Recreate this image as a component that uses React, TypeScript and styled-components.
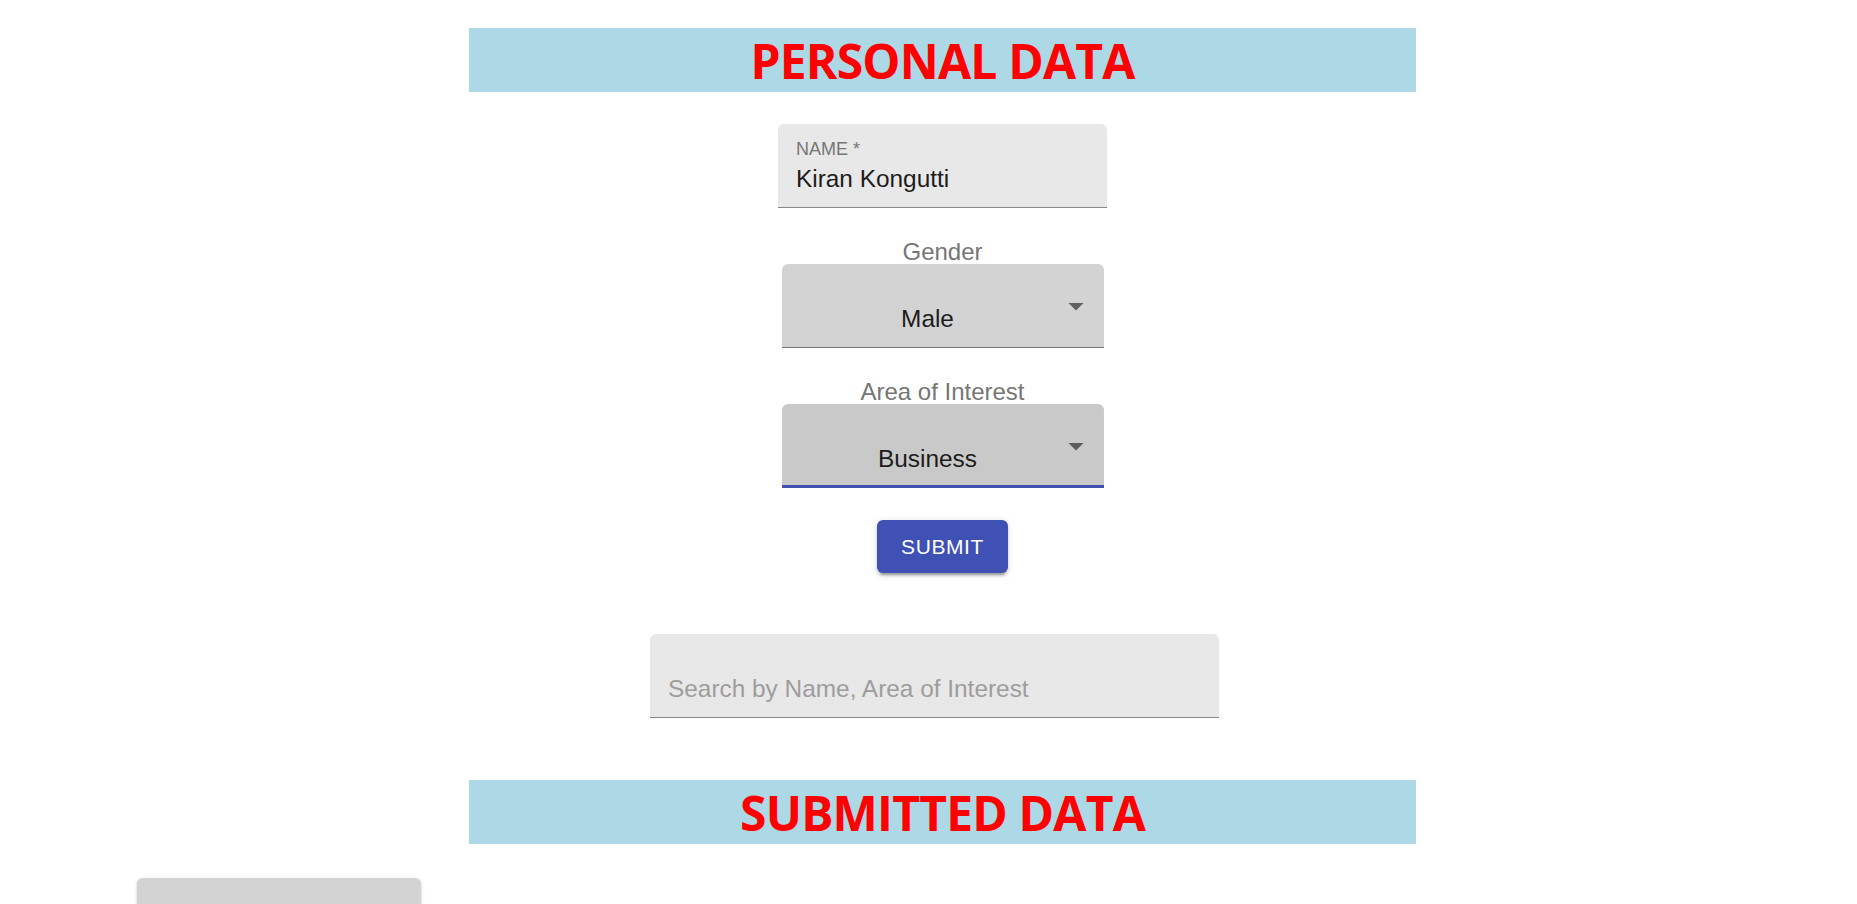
import React from "react";
import styled, { createGlobalStyle } from "styled-components";

const GlobalStyle = createGlobalStyle`
  html, body {
    margin: 0;
    padding: 0;
    overflow: hidden;
    background: #ffffff;
  }
  body {
    font-family: "Liberation Sans", Arial, sans-serif;
  }
`;

const Page = styled.div`
  width: 1857px;
  height: 904px;
  box-sizing: border-box;
  padding: 28px 0 0 28px;
  display: flex;
  flex-direction: column;
  overflow: hidden;
`;

const SectionHeader = styled.h1<{ $top?: number }>`
  align-self: center;
  width: 947px;
  height: 64px;
  margin: ${(p) => p.$top ?? 0}px 0 0 0;
  background: #add8e6;
  color: #ff0000;
  font-family: "Open Sans", "Noto Sans", sans-serif;
  font-weight: 700;
  font-size: 48px;
  line-height: 66px;
  text-align: center;
  letter-spacing: -0.8px;
`;

const Form = styled.form`
  display: flex;
  flex-direction: column;
  align-items: center;
  margin-top: 32px;
`;

const FilledField = styled.div<{ $width: number; $right?: number }>`
  width: ${(p) => p.$width}px;
  height: 84px;
  box-sizing: border-box;
  margin-right: ${(p) => p.$right ?? 0}px;
  padding: 0 18px;
  background: #e8e8e8;
  border-radius: 6px 6px 0 0;
  border-bottom: 1.5px solid rgba(0, 0, 0, 0.42);
  display: flex;
  flex-direction: column;
`;

const FieldLabel = styled.div`
  margin-top: 15px;
  font-size: 18px;
  line-height: 20px;
  color: #777777;
  text-transform: uppercase;
`;

const FieldValue = styled.div<{ $placeholder?: boolean; $gap?: number }>`
  margin-top: ${(p) => p.$gap ?? 6}px;
  font-size: 24.4px;
  line-height: 28px;
  color: ${(p) => (p.$placeholder ? "#9d9d9d" : "#1c1c1c")};
  white-space: nowrap;
`;

const SelectLabel = styled.div`
  margin: 34px 0 2px;
  font-size: 24px;
  line-height: 20px;
  height: 20px;
  color: #767676;
  text-align: center;
`;

const SelectBox = styled.div<{ $focused?: boolean }>`
  position: relative;
  width: 322px;
  height: 84px;
  box-sizing: border-box;
  padding: 41px 48px 0 18px;
  background: ${(p) => (p.$focused ? "#c9c9c9" : "#d3d3d3")};
  border-radius: 6px 6px 0 0;
  border-bottom: ${(p) =>
    p.$focused ? "3px solid #3f51b5" : "1.5px solid rgba(0, 0, 0, 0.42)"};
`;

const SelectValue = styled.div`
  font-size: 24.4px;
  line-height: 28px;
  color: #1c1c1c;
  text-align: center;
`;

const ArrowIcon = styled.svg`
  position: absolute;
  right: 10px;
  top: 24px;
  width: 36px;
  height: 36px;
  fill: rgba(0, 0, 0, 0.54);
`;

const SubmitButton = styled.button`
  margin-top: 32px;
  width: 131px;
  height: 53px;
  border: none;
  border-radius: 6px;
  background: #3f51b5;
  color: #ffffff;
  font-family: "Liberation Sans", Arial, sans-serif;
  font-size: 21px;
  letter-spacing: 0.6px;
  text-transform: uppercase;
  box-shadow: 0 4.5px 1.5px -3px rgba(0, 0, 0, 0.2),
    0 3px 3px 0 rgba(0, 0, 0, 0.14), 0 1.5px 7.5px 0 rgba(0, 0, 0, 0.12);
  cursor: pointer;
`;

const SearchRow = styled.div`
  display: flex;
  justify-content: center;
  margin-top: 61px;
`;

const CardGrid = styled.div`
  display: grid;
  grid-template-columns: repeat(4, 284px);
  gap: 40px;
  margin-top: 34px;
  padding-left: 109px;
`;

const DataCard = styled.div`
  height: 200px;
  background: #d3d3d3;
  border-radius: 6px;
  box-shadow: 0 3px 1.5px -1.5px rgba(0, 0, 0, 0.2),
    0 1.5px 1.5px 0 rgba(0, 0, 0, 0.14), 0 1.5px 4.5px 0 rgba(0, 0, 0, 0.12);
`;

const Arrow = () => (
  <ArrowIcon viewBox="0 0 24 24">
    <path d="M7 10l5 5 5-5z" />
  </ArrowIcon>
);

export default function App() {
  return (
    <>
      <GlobalStyle />
      <Page>
        <SectionHeader>PERSONAL DATA</SectionHeader>
        <Form onSubmit={(e) => e.preventDefault()}>
          <FilledField $width={329}>
            <FieldLabel>Name *</FieldLabel>
            <FieldValue>Kiran Kongutti</FieldValue>
          </FilledField>
          <SelectLabel>Gender</SelectLabel>
          <SelectBox>
            <SelectValue>Male</SelectValue>
            <Arrow />
          </SelectBox>
          <SelectLabel>Area of Interest</SelectLabel>
          <SelectBox $focused>
            <SelectValue>Business</SelectValue>
            <Arrow />
          </SelectBox>
          <SubmitButton type="submit">Submit</SubmitButton>
        </Form>
        <SearchRow>
          <FilledField $width={569} $right={16}>
            <FieldValue $placeholder $gap={41}>
              Search by Name, Area of Interest
            </FieldValue>
          </FilledField>
        </SearchRow>
        <SectionHeader $top={62}>SUBMITTED DATA</SectionHeader>
        <CardGrid>
          <DataCard />
        </CardGrid>
      </Page>
    </>
  );
}
